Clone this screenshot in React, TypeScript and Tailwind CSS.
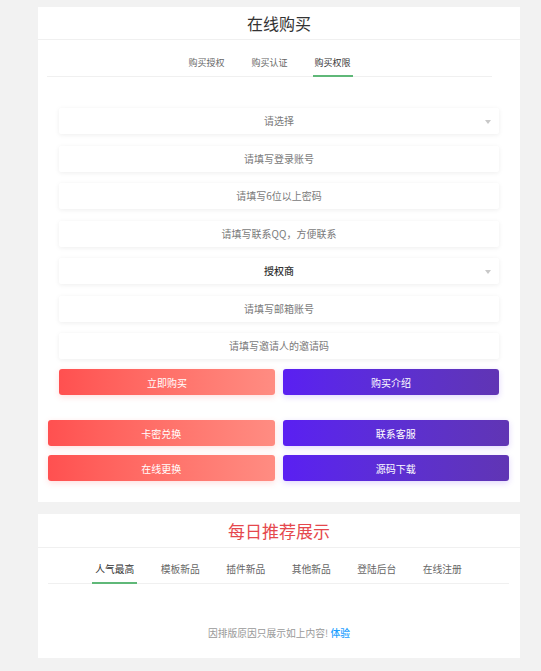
import React from "react";

const inputs: { text: string; select?: boolean; strong?: boolean }[] = [
  { text: "请选择", select: true },
  { text: "请填写登录账号" },
  { text: "请填写6位以上密码" },
  { text: "请填写联系QQ，方便联系" },
  { text: "授权商", select: true, strong: true },
  { text: "请填写邮箱账号" },
  { text: "请填写邀请人的邀请码" },
];

const redBtn =
  "flex-1 h-[26px] rounded-[3px] bg-gradient-to-r from-[#ff5050] to-[#ff8c82] text-white text-[10px] flex items-center justify-center shadow-[0_2px_6px_rgba(255,80,80,0.18)]";
const purpleBtn =
  "flex-1 h-[26px] rounded-[3px] bg-gradient-to-r from-[#5a1ff2] to-[#6035b4] text-white text-[10px] flex items-center justify-center shadow-[0_2px_6px_rgba(90,31,242,0.18)]";

export default function App() {
  return (
    <div className="min-h-[671px] w-[541px] bg-[#f2f2f2] font-['Noto_Sans_CJK_SC','Noto_Sans',sans-serif] pt-[7px]">
      <div className="ml-[38px] w-[482px] flex flex-col gap-[12px]">
        {/* Card 1 */}
        <div className="bg-white pb-[21px]">
          <div className="h-[33px] border-b border-[#f0f0f0] flex items-center justify-center text-[16px] text-[#333] leading-none">
            在线购买
          </div>
          <div className="ml-[9px] mr-[28px] pt-[10px] border-b border-[#f0f0f0] flex justify-center gap-[23px]">
            {["购买授权", "购买认证", "购买权限"].map((t, i) => (
              <div
                key={t}
                className={
                  "h-[27px] px-[2px] flex items-center text-[9px] leading-none -mb-px border-b-2 " +
                  (i === 2 ? "border-[#5fb878] text-[#333]" : "text-[#666] border-transparent")
                }
              >
                {t}
              </div>
            ))}
          </div>
          <div className="mt-[31px] px-[21px] flex flex-col gap-[11.5px]">
            {inputs.map((f) => (
              <div
                key={f.text}
                className="relative h-[26px] bg-white rounded-[2px] shadow-[0_1px_5px_rgba(0,0,0,0.07)] flex items-center justify-center text-[10px] leading-none"
              >
                <span className={f.strong ? "text-[#333] font-medium" : "text-[#7a7a7a]"}>{f.text}</span>
                {f.select && (
                  <span className="absolute right-[8px] top-[12px] w-0 h-0 border-l-[3.5px] border-r-[3.5px] border-t-[4px] border-l-transparent border-r-transparent border-t-[#c8c8c8]" />
                )}
              </div>
            ))}
            <div className="flex gap-[8px] -mt-[1.5px]">
              <div className={redBtn}>立即购买</div>
              <div className={purpleBtn}>购买介绍</div>
            </div>
          </div>
          <div className="mt-[25px] pl-[10px] pr-[11px] flex flex-col gap-[9px]">
            <div className="flex gap-[8px]">
              <div className={redBtn}>卡密兑换</div>
              <div className={purpleBtn}>联系客服</div>
            </div>
            <div className="flex gap-[8px]">
              <div className={redBtn}>在线更换</div>
              <div className={purpleBtn}>源码下载</div>
            </div>
          </div>
        </div>

        {/* Card 2 */}
        <div className="bg-white">
          <div className="h-[34px] border-b border-[#f0f0f0] flex items-center justify-center text-[17px] text-[#e5484d] leading-none">
            每日推荐展示
          </div>
          <div className="ml-[10px] mr-[11px] pt-[10px] border-b border-[#f0f0f0] flex justify-center gap-[20.5px]">
            {["人气最高", "模板新品", "插件新品", "其他新品", "登陆后台", "在线注册"].map((t, i) => (
              <div
                key={t}
                className={
                  "h-[26px] px-[3px] flex items-center text-[9.75px] leading-none -mb-px border-b-2 " +
                  (i === 0 ? "border-[#5fb878] text-[#333]" : "border-transparent text-[#666]")
                }
              >
                {t}
              </div>
            ))}
          </div>
          <div className="pt-[45px] pb-[19px] text-center text-[9.75px] leading-none text-[#999]">
            因排版原因只展示如上内容!{" "}
            <span className="text-[#1e9fff] font-medium">体验</span>
          </div>
        </div>
      </div>
    </div>
  );
}
